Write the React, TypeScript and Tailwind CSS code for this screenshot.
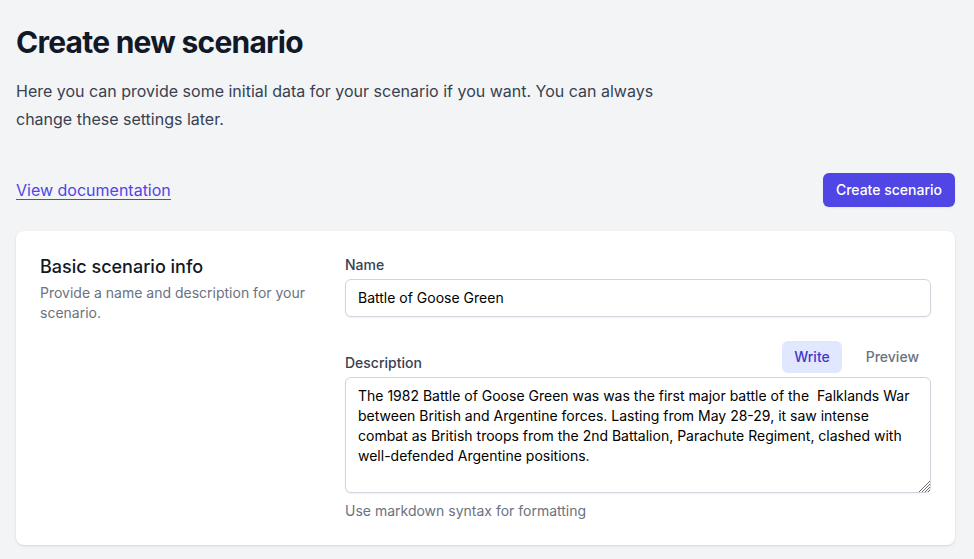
import { useState } from "react";

const field =
  "block w-full rounded-md border border-[#d1d5db] bg-white px-3 py-2 text-sm text-black shadow-xs focus:border-[#6366f1] focus:outline-none";

// Diagonal hatching drawn over the text area's resize corner.
function ResizeGrip() {
  return (
    <svg
      className="pointer-events-none absolute right-px bottom-px"
      width="11"
      height="11"
      viewBox="0 0 11 11"
      fill="none"
      stroke="#6b6b6b"
      aria-hidden="true"
    >
      <path d="M0 11 11 0M3 11l8-8M6 11l5-5M9 11l2-2" />
    </svg>
  );
}

export default function App() {
  const [name, setName] = useState("Battle of Goose Green");
  const [description, setDescription] = useState(
    "The 1982 Battle of Goose Green was was the first major battle of the  Falklands War between British and Argentine forces. Lasting from May 28-29, it saw intense combat as British troops from the 2nd Battalion, Parachute Regiment, clashed with well-defended Argentine positions."
  );
  const [preview, setPreview] = useState(false);
  const active = "rounded-md bg-[#e0e7ff] px-3 py-1.5 text-sm font-medium text-[#4338ca]";
  const inactive = "rounded-md px-3 py-1.5 text-sm font-medium text-[#6b7280]";

  return (
    <main className="min-h-screen bg-[#f3f4f6] pt-6 pr-[19px] pb-3.5 pl-4 font-['Inter',sans-serif]">
      <header className="max-w-[65ch]">
        <h1 className="text-3xl font-bold tracking-tight text-[#111827]">Create new scenario</h1>
        <p className="mt-[17px] leading-7 text-[#374151]">
          Here you can provide some initial data for your scenario if you want. You can always change these
          settings later.
        </p>
      </header>

      <div className="mt-10 flex items-center justify-between">
        <a href="#documentation" className="border-b border-[#4f46e5] leading-[18px] text-[#4f46e5]">
          View documentation
        </a>
        <button
          type="button"
          className="rounded-md border border-transparent bg-[#4f46e5] px-3 py-1.5 text-sm font-medium text-white shadow-xs"
        >
          Create scenario
        </button>
      </div>

      <section className="mt-6 grid grid-cols-3 gap-6 rounded-lg bg-white p-6 shadow-sm">
        <div>
          <h2 className="text-lg leading-6 font-medium text-[#111827]">Basic scenario info</h2>
          <p className="mt-1 text-sm text-[#6b7280]">Provide a name and description for your scenario.</p>
        </div>
        <form className="col-span-2">
          <label htmlFor="name" className="block text-sm font-medium text-[#374151]">
            Name
          </label>
          <input
            id="name"
            type="text"
            className={field + " mt-1"}
            value={name}
            onChange={(e) => setName(e.target.value)}
          />
          <div className="mt-6 flex items-end justify-between">
            <label htmlFor="description" className="block text-sm font-medium text-[#374151]">
              Description
            </label>
            <div className="flex gap-3">
              <button type="button" onClick={() => setPreview(false)} className={preview ? inactive : active}>
                Write
              </button>
              <button type="button" onClick={() => setPreview(true)} className={preview ? active : inactive}>
                Preview
              </button>
            </div>
          </div>
          {preview ? (
            <div className={field + " mt-1 min-h-29"}>{description}</div>
          ) : (
            <div className="relative mt-1">
              <textarea
                id="description"
                className={field + " h-29 resize-y [&::-webkit-resizer]:bg-transparent"}
                value={description}
                onChange={(e) => setDescription(e.target.value)}
              />
              <ResizeGrip />
            </div>
          )}
          <p className="mt-2 text-sm text-[#6b7280]">Use markdown syntax for formatting</p>
        </form>
      </section>
    </main>
  );
}
